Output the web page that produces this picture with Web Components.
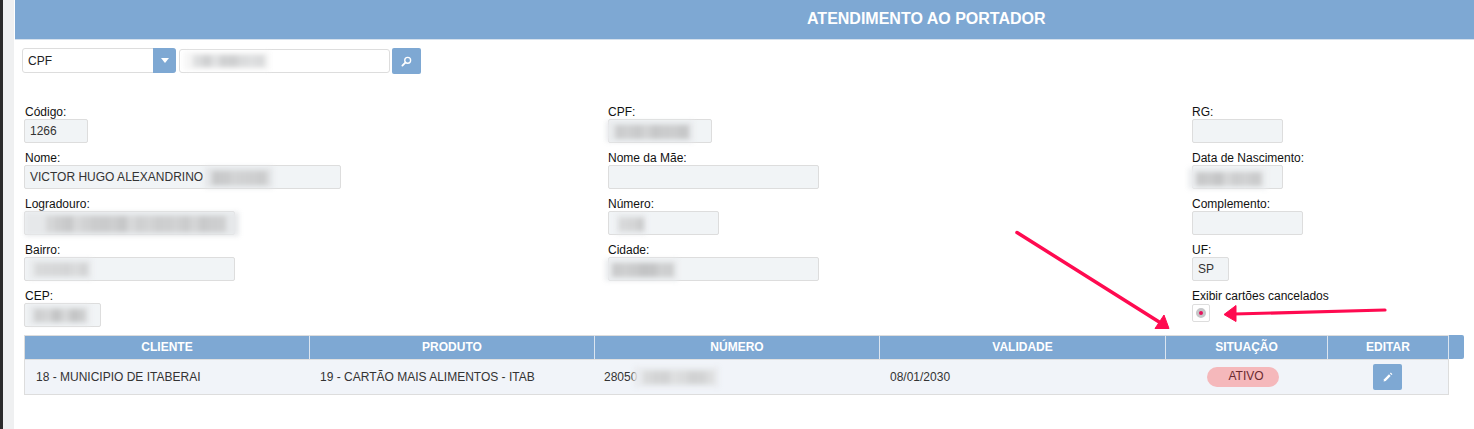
<!DOCTYPE html>
<html lang="pt-BR">
<head>
<meta charset="utf-8">
<title>Atendimento ao Portador</title>
<style>
  html, body { margin: 0; height: 100%; overflow: hidden; background: #fff; }
  body { font-family: "Liberation Sans", Arial, sans-serif; font-size: 12px; color: #222; }
</style>
</head>
<body>
<portal-page>
  <page-header slot="header">ATENDIMENTO AO PORTADOR</page-header>

  <search-bar slot="search" option="CPF"></search-bar>

  <field-grid slot="fields">
    <div slot="col1" style="--label-indent: 1px">
      <data-field label="Código:" value="1266" width="64"></data-field>
      <data-field label="Nome:" value="VICTOR HUGO ALEXANDRINO" width="317"></data-field>
      <data-field label="Logradouro:" width="211"></data-field>
      <data-field label="Bairro:" width="211"></data-field>
      <data-field label="CEP:" width="77"></data-field>
    </div>
    <div slot="col2">
      <data-field label="CPF:" width="104"></data-field>
      <data-field label="Nome da Mãe:" width="211"></data-field>
      <data-field label="Número:" width="111"></data-field>
      <data-field label="Cidade:" width="211"></data-field>
    </div>
    <div slot="col3">
      <data-field label="RG:" width="91"></data-field>
      <data-field label="Data de Nascimento:" width="91"></data-field>
      <data-field label="Complemento:" width="111"></data-field>
      <data-field label="UF:" value="SP" width="37"></data-field>
      <radio-field label="Exibir cartões cancelados"></radio-field>
    </div>
  </field-grid>

  <cards-table slot="table">
    <span slot="cliente">18 - MUNICIPIO DE ITABERAI</span>
    <span slot="produto">19 - CARTÃO MAIS ALIMENTOS - ITAB</span>
    <span slot="numero">28050</span>
    <span slot="validade">08/01/2030</span>
    <status-pill slot="situacao">ATIVO</status-pill>
    <edit-button slot="editar"></edit-button>
  </cards-table>

  <!-- borroes que escondem os dados pessoais -->
  <blur-patch slot="over" x="184" y="52" w="86" h="18" seed="3" tone="206" base="#f6f6f6"></blur-patch>
  <blur-patch slot="over" x="606" y="121" w="88" h="21" seed="7" tone="196" base="#e9ebed"></blur-patch>
  <blur-patch slot="over" x="205" y="167" w="68" h="21" seed="11" tone="200" base="#e4e6e8"></blur-patch>
  <blur-patch slot="over" x="25" y="212" w="214" h="24" seed="17" tone="198" base="#e6e8ea"></blur-patch>
  <blur-patch slot="over" x="29" y="259" w="63" h="20" seed="23" tone="204" base="#e8eaec"></blur-patch>
  <blur-patch slot="over" x="28" y="305" w="62" h="20" seed="29" tone="196" base="#e8eaec"></blur-patch>
  <blur-patch slot="over" x="616" y="214" w="30" h="20" seed="31" tone="200" base="#e8eaec"></blur-patch>
  <blur-patch slot="over" x="605" y="259" w="73" h="22" seed="37" tone="190" base="#ebedef"></blur-patch>
  <blur-patch slot="over" x="1188" y="168" w="79" h="21" seed="41" tone="196" base="#eceef0"></blur-patch>
  <blur-patch slot="over" x="634" y="367" w="85" h="20" seed="43" tone="208" base="#e9ebee"></blur-patch>

  <pink-arrows slot="over"></pink-arrows>
</portal-page>

<script>
// Page shell
const portalTemplate = document.createElement('template');
portalTemplate.innerHTML = `
<style>
  :host { display: flex; height: 429px; position: relative; overflow: hidden; }
  .rail { width: 11px; flex: none; background: #eff0f1; border-left: 3px solid #2b2b2b; }
  .main { flex: 1; min-width: 0; display: flex; flex-direction: column; }
</style>
<div class="rail"></div>
<div class="main">
  <slot name="header"></slot>
  <slot name="search"></slot>
  <slot name="fields"></slot>
  <slot name="table"></slot>
</div>
<slot name="over"></slot>
`;

class PortalPage extends HTMLElement {
  constructor() {
    super();
    this.attachShadow({ mode: 'open' });
    this.shadowRoot.appendChild(portalTemplate.content.cloneNode(true));
  }
}
customElements.define('portal-page', PortalPage);

// Header
const headerTemplate = document.createElement('template');
headerTemplate.innerHTML = `
<style>
  :host {
    display: block;
    box-sizing: border-box;
    height: 40px;
    margin-left: 1px;
    padding-left: 792px;
    background: #7ea8d3;
    border-bottom: 1px solid #d5e0ec;
    color: #fff;
    font-weight: bold;
    font-size: 16px;
    line-height: 37px;
  }
</style>
<slot></slot>
`;

class PageHeader extends HTMLElement {
  constructor() {
    super();
    this.attachShadow({ mode: 'open' });
    this.shadowRoot.appendChild(headerTemplate.content.cloneNode(true));
  }
}
customElements.define('page-header', PageHeader);

// Search bar
const searchTemplate = document.createElement('template');
searchTemplate.innerHTML = `
<style>
  :host { display: flex; align-items: flex-start; padding: 8px 0 0 8px; height: 26px; }
  .select {
    box-sizing: border-box;
    width: 154px;
    height: 25px;
    display: flex;
    justify-content: space-between;
    background: #fff;
    border: 1px solid #ddd;
    border-radius: 3px;
    padding-left: 5px;
    line-height: 24px;
  }
  .caret {
    width: 23px;
    margin: -1px -1px -1px 0;
    background: #7ea8d3;
    border-radius: 0 3px 3px 0;
    display: flex;
    align-items: center;
    justify-content: center;
  }
  .caret i { border: 4px solid transparent; border-top: 5px solid #fff; border-bottom: 0; }
  .input {
    box-sizing: border-box;
    width: 211px;
    height: 24px;
    margin: 1px 0 0 3px;
    background: #fff;
    border: 1px solid #ddd;
    border-radius: 3px;
  }
  .go {
    width: 29px;
    height: 26px;
    margin-left: 2px;
    background: #7ea8d3;
    border-radius: 2px;
    display: flex;
    align-items: center;
    justify-content: center;
  }
  svg { display: block; }
</style>
<div class="select"><span id="opt"></span><div class="caret"><i></i></div></div>
<div class="input"></div>
<div class="go">
  <svg width="11" height="11" viewBox="0 0 12 12" fill="none" stroke="#fff">
    <circle cx="7.3" cy="4.7" r="3.2" stroke-width="1.5"/>
    <path d="M5 7 1.5 10.5" stroke-width="2" stroke-linecap="round"/>
  </svg>
</div>
`;

class SearchBar extends HTMLElement {
  constructor() {
    super();
    this.attachShadow({ mode: 'open' });
    this.shadowRoot.appendChild(searchTemplate.content.cloneNode(true));
    this.shadowRoot.getElementById('opt').textContent = this.getAttribute('option') || '';
  }
}
customElements.define('search-bar', SearchBar);

// Three column form
const gridTemplate = document.createElement('template');
gridTemplate.innerHTML = `
<style>
  :host {
    display: grid;
    grid-template-columns: 584px 584px 1fr;
    margin-top: 31px;
    padding-left: 10px;
  }
</style>
<slot name="col1"></slot>
<slot name="col2"></slot>
<slot name="col3"></slot>
`;

class FieldGrid extends HTMLElement {
  constructor() {
    super();
    this.attachShadow({ mode: 'open' });
    this.shadowRoot.appendChild(gridTemplate.content.cloneNode(true));
  }
}
customElements.define('field-grid', FieldGrid);

// Label + read only box
const fieldTemplate = document.createElement('template');
fieldTemplate.innerHTML = `
<style>
  :host { display: block; height: 46px; color: #111; }
  .label { height: 14px; line-height: 14px; white-space: nowrap; padding-left: var(--label-indent, 0); }
  .box {
    box-sizing: border-box;
    height: 24px;
    padding-left: 5px;
    background: #f1f4f6;
    border: 1px solid #ddd;
    border-radius: 2px;
    color: #333;
    line-height: 23px;
    white-space: nowrap;
  }
</style>
<div class="label"></div>
<div class="box"></div>
`;

class DataField extends HTMLElement {
  constructor() {
    super();
    this.attachShadow({ mode: 'open' });
    this.shadowRoot.appendChild(fieldTemplate.content.cloneNode(true));
    this.shadowRoot.querySelector('.label').textContent = this.getAttribute('label') || '';
    const box = this.shadowRoot.querySelector('.box');
    box.textContent = this.getAttribute('value') || '';
    box.style.width = (this.getAttribute('width') || 100) + 'px';
  }
}
customElements.define('data-field', DataField);

// Label + radio in a box
const radioTemplate = document.createElement('template');
radioTemplate.innerHTML = `
<style>
  :host { display: block; color: #111; }
  .label { height: 14px; line-height: 14px; white-space: nowrap; }
  .box {
    box-sizing: border-box;
    width: 18px;
    height: 18px;
    margin-top: 1px;
    background: #fff;
    border: 1px solid #ddd;
    border-radius: 2px;
    display: flex;
    align-items: center;
    justify-content: center;
  }
  .dot {
    box-sizing: border-box;
    width: 10px;
    height: 10px;
    border-radius: 50%;
    border: 3px solid #c6c6c8;
    background: #e4135c;
  }
</style>
<div class="label"></div>
<div class="box"><div class="dot"></div></div>
`;

class RadioField extends HTMLElement {
  constructor() {
    super();
    this.attachShadow({ mode: 'open' });
    this.shadowRoot.appendChild(radioTemplate.content.cloneNode(true));
    this.shadowRoot.querySelector('.label').textContent = this.getAttribute('label') || '';
  }
}
customElements.define('radio-field', RadioField);

// Cards table
const tableTemplate = document.createElement('template');
tableTemplate.innerHTML = `
<style>
  :host { display: block; margin-left: 11px; width: 1439px; }
  .row { display: grid; grid-template-columns: 285px 285px 285px 286px 162px 121px; }
  .head { grid-template-columns: 285px 285px 285px 286px 162px 121px 15px; height: 24px; box-sizing: border-box; }
  .head div {
    background: #7ea8d3;
    border-top: 1px solid #ddd;
    border-right: 1px solid #dbe5f0;
    color: #fff;
    font-weight: bold;
    text-align: center;
    line-height: 22px;
  }
  .head div:first-child { box-shadow: -1px 0 0 #ddd; }
  .head div:last-child { border: 0; border-radius: 0 2px 2px 0; }
  .body {
    width: 1425px;
    box-sizing: border-box;
    height: 37px;
    margin-top: -1px;
    margin-left: -1px;
    background: #f1f4f9;
    border: 1px solid #ddd;
    border-top: 2px solid #e0e0e0;
    color: #333;
  }
  .body div { display: flex; align-items: center; padding-left: 10px; white-space: nowrap; }
  .body div:first-child { padding-left: 11px; }
  .body div:nth-child(3) { padding-left: 9px; }
  .body .mid { justify-content: center; padding: 0; }
</style>
<div class="row head">
  <div>CLIENTE</div><div>PRODUTO</div><div>NÚMERO</div><div>VALIDADE</div><div>SITUAÇÃO</div><div>EDITAR</div><div></div>
</div>
<div class="row body">
  <div><slot name="cliente"></slot></div>
  <div><slot name="produto"></slot></div>
  <div><slot name="numero"></slot></div>
  <div><slot name="validade"></slot></div>
  <div class="mid"><slot name="situacao"></slot></div>
  <div class="mid"><slot name="editar"></slot></div>
</div>
`;

class CardsTable extends HTMLElement {
  constructor() {
    super();
    this.attachShadow({ mode: 'open' });
    this.shadowRoot.appendChild(tableTemplate.content.cloneNode(true));
  }
}
customElements.define('cards-table', CardsTable);

// Status pill
const pillTemplate = document.createElement('template');
pillTemplate.innerHTML = `
<style>
  :host {
    display: block;
    box-sizing: border-box;
    width: 72px;
    height: 20px;
    margin-right: 9px;
    padding-left: 7px;
    border-radius: 10px;
    background: #f5b8bb;
    color: #6b2a30;
    text-align: center;
    line-height: 19px;
  }
</style>
<slot></slot>
`;

class StatusPill extends HTMLElement {
  constructor() {
    super();
    this.attachShadow({ mode: 'open' });
    this.shadowRoot.appendChild(pillTemplate.content.cloneNode(true));
  }
}
customElements.define('status-pill', StatusPill);

// Edit button
const editTemplate = document.createElement('template');
editTemplate.innerHTML = `
<style>
  :host {
    display: flex;
    width: 29px;
    height: 26px;
    margin-right: 2px;
    background: #7ea8d3;
    border-radius: 2px;
    align-items: center;
    justify-content: center;
  }
  svg { display: block; }
</style>
<svg width="10" height="10" viewBox="0 0 11 11" fill="#fff">
  <path d="M6.6 2.6 8.4 4.4 3 9.8 0.6 10.4 1.2 8Z"/>
  <path d="M7.6 1.6 8.6 0.6 10.4 2.4 9.4 3.4Z"/>
</svg>
`;

class EditButton extends HTMLElement {
  constructor() {
    super();
    this.attachShadow({ mode: 'open' });
    this.shadowRoot.appendChild(editTemplate.content.cloneNode(true));
  }
}
customElements.define('edit-button', EditButton);

// Blurred smudge over private data, mottled bands from a seed
const blurTemplate = document.createElement('template');
blurTemplate.innerHTML = `
<style>
  :host { display: block; position: absolute; filter: blur(2.4px); }
  .a { position: absolute; left: 10%; right: 6%; top: 18%; bottom: 16%; }
</style>
<div class="a"></div>
`;

class BlurPatch extends HTMLElement {
  constructor() {
    super();
    this.attachShadow({ mode: 'open' });
    this.shadowRoot.appendChild(blurTemplate.content.cloneNode(true));
  }

  connectedCallback() {
    const w = Number(this.getAttribute('w'));
    this.style.left = this.getAttribute('x') + 'px';
    this.style.top = this.getAttribute('y') + 'px';
    this.style.width = w + 'px';
    this.style.height = this.getAttribute('h') + 'px';
    this.style.background = this.getAttribute('base');

    let seed = Number(this.getAttribute('seed'));
    const tone = Number(this.getAttribute('tone'));
    const stops = [];
    for (let x = 0; x < w; x += 9) {
      seed = (seed * 137 + 71) % 251;
      const v = tone + (seed % 18);
      stops.push(`rgb(${v},${v + 1},${v + 2}) ${x}px ${x + 9}px`);
    }
    this.shadowRoot.querySelector('.a').style.background = `linear-gradient(90deg, ${stops.join(', ')})`;
  }
}
customElements.define('blur-patch', BlurPatch);

// Annotation arrows
const arrowsTemplate = document.createElement('template');
arrowsTemplate.innerHTML = `
<style>
  :host { position: absolute; left: 0; top: 0; width: 1474px; height: 429px; pointer-events: none; }
  svg { display: block; }
</style>
<svg width="1474" height="429" viewBox="0 0 1474 429">
  <g fill="#ff0a50" stroke="#ff0a50">
    <path d="M1017 232.5 1160 322.5" stroke-width="3.5" stroke-linecap="round" fill="none"/>
    <path d="M1169 328.5 1155 328.5 1164 315Z" stroke-width="1" stroke-linejoin="round"/>
    <path d="M1385 310 1234 314" stroke-width="3.2" stroke-linecap="round" fill="none"/>
    <path d="M1224 314.5 1236 305.5 1236 321.5Z" stroke-width="1" stroke-linejoin="round"/>
  </g>
</svg>
`;

class PinkArrows extends HTMLElement {
  constructor() {
    super();
    this.attachShadow({ mode: 'open' });
    this.shadowRoot.appendChild(arrowsTemplate.content.cloneNode(true));
  }
}
customElements.define('pink-arrows', PinkArrows);
</script>
</body>
</html>
